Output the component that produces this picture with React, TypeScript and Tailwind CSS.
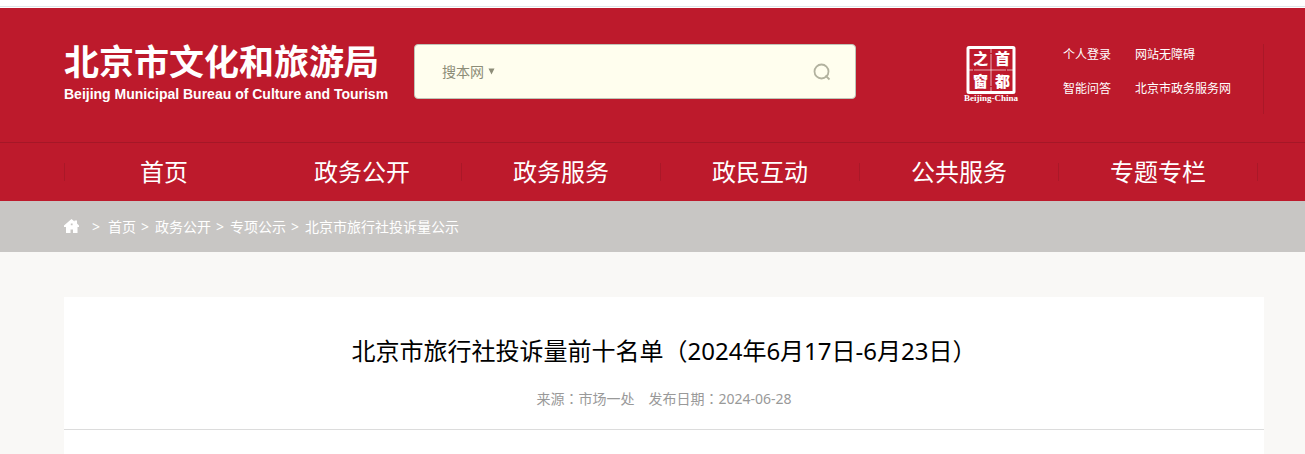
import { useState } from "react";

const NAV_ITEMS = ["首页", "政务公开", "政务服务", "政民互动", "公共服务", "专题专栏"];

const CRUMBS = ["首页", "政务公开", "专项公示", "北京市旅行社投诉量公示"];

const USER_LINKS = [
  ["个人登录", "网站无障碍"],
  ["智能问答", "北京市政务服务网"],
];

function CapitalSeal() {
  return (
    <a href="#" aria-label="首都之窗" className="block">
      <svg width="56" height="60" viewBox="0 0 56 60" fill="#fff">
        <rect x="5" y="3.5" width="46" height="45" rx="1" fill="none" stroke="#fff" strokeWidth="3" />
        <path d="M28 5v42M6 26h44" stroke="#fff" strokeOpacity="0.65" strokeDasharray="4 1 32 1 6" />
        <g fontSize="15" fontWeight="900" fontFamily="'Noto Sans CJK SC', sans-serif">
          <text x="10" y="20">之</text>
          <text x="32" y="20">首</text>
          <text x="10" y="43">窗</text>
          <text x="32" y="43">都</text>
        </g>
        <text x="28" y="57" textAnchor="middle" fontSize="9" fontWeight="700" fontFamily="'Liberation Serif', serif">
          Beijing-China
        </text>
      </svg>
    </a>
  );
}

function SearchBox() {
  const [scope, setScope] = useState("site");
  const [query, setQuery] = useState("");

  return (
    <form
      onSubmit={(e) => e.preventDefault()}
      className="flex h-[55px] w-[442px] items-center rounded border border-[#bfc4b8] bg-[#fffeee] pr-6 pl-[27px] text-sm text-[#8d8d78]"
    >
      <label className="flex items-center gap-1">
        <select
          aria-label="搜索范围"
          value={scope}
          onChange={(e) => setScope(e.target.value)}
          className="appearance-none bg-transparent outline-none"
        >
          <option value="site">搜本网</option>
        </select>
        <svg width="7" height="7" viewBox="0 0 7 7" fill="currentColor">
          <path d="M0.5 0.5h6L3.5 6.5z" />
        </svg>
      </label>
      <input
        type="text"
        aria-label="搜索"
        value={query}
        onChange={(e) => setQuery(e.target.value)}
        className="mx-3 h-full min-w-0 flex-1 bg-transparent outline-none"
      />
      <button type="submit" aria-label="搜索" className="text-[#b2b29f]">
        <svg width="18" height="18" viewBox="0 0 18 18" fill="none" stroke="currentColor" strokeWidth="1.8">
          <circle cx="8.5" cy="8.5" r="7" />
          <path d="M12.5 12.5L16.5 16.5" />
        </svg>
      </button>
    </form>
  );
}

function Header() {
  return (
    <header className="bg-[#bd1a2c] text-white">
      <div className="flex h-[134px] items-start pt-9 pr-[41px] pl-16">
        <a href="#" className="w-[350px] whitespace-nowrap">
          <div className="text-[35px] leading-9 font-bold">北京市文化和旅游局</div>
          <div className="mt-1 font-['Liberation_Sans',sans-serif] text-sm leading-5 font-bold">
            Beijing Municipal Bureau of Culture and Tourism
          </div>
        </a>
        <SearchBox />
        <div className="ml-auto flex h-[70px] border-r border-[#aa1828] pr-8">
          <CapitalSeal />
          <div className="ml-11 grid grid-cols-[auto_auto] content-start gap-x-6 gap-y-4 pt-[2px] text-xs leading-[18px] whitespace-nowrap">
            {USER_LINKS.flat().map((label) => (
              <a key={label} href="#" className="hover:underline">
                {label}
              </a>
            ))}
          </div>
        </div>
      </div>

      <nav className="border-t border-[#a51727] pr-[47px] pl-16">
        <ul className="flex h-[58px] items-center">
          {NAV_ITEMS.map((item, i) => (
            <li
              key={item}
              className={`flex h-[18px] flex-1 items-center justify-center border-[#aa1828] ${i === 0 ? "border-l" : "border-r"}`}
            >
              <a href="#" className="text-2xl whitespace-nowrap">
                {item}
              </a>
            </li>
          ))}
        </ul>
      </nav>
    </header>
  );
}

function Breadcrumb() {
  return (
    <div className="flex h-[51px] items-center bg-[#c8c6c4] pl-16 text-sm text-white">
      <a href="#" aria-label="首页" className="mr-3">
        <svg width="16" height="15" viewBox="0 0 16 15" fill="#fff">
          <path
            fillRule="evenodd"
            d="M7.5 0L10.5 2.5V1.5H13V4.5L15 6.5V8H13.5V14H9V10.5H6.5V14H2V8H0V6.5zM6.8 4.5V6.2H8.6V4.5z"
          />
        </svg>
      </a>
      {CRUMBS.map((crumb, i) => (
        <span key={crumb} className="flex">
          <span className={i === 0 ? "mr-2" : "mr-[6px] ml-[5px]"}>&gt;</span>
          <a href="#">{crumb}</a>
        </span>
      ))}
    </div>
  );
}

export default function App() {
  return (
    <div className="min-h-screen bg-[#f9f8f6] font-['Noto_Sans','Noto_Sans_CJK_SC',sans-serif]">
      <div className="h-[7px] border-b border-[#dfe6ea] bg-white" />
      <div className="h-px bg-white" />
      <Header />
      <Breadcrumb />
      <main className="pt-[45px] pr-[41px] pl-16">
        <article className="min-h-[157px] bg-white">
          <div className="border-b border-[#dcdcdc] pt-9 pb-5 text-center">
            <h1 className="text-2xl leading-9 font-normal text-black">
              北京市旅行社投诉量前十名单（2024年6月17日-6月23日）
            </h1>
            <div className="mt-5 flex justify-center gap-[14px] font-['Noto_Sans','Noto_Sans_CJK_TC',sans-serif] text-sm text-[#999]">
              <span>来源：市场一处</span>
              <span>发布日期：2024-06-28</span>
            </div>
          </div>
        </article>
      </main>
    </div>
  );
}
